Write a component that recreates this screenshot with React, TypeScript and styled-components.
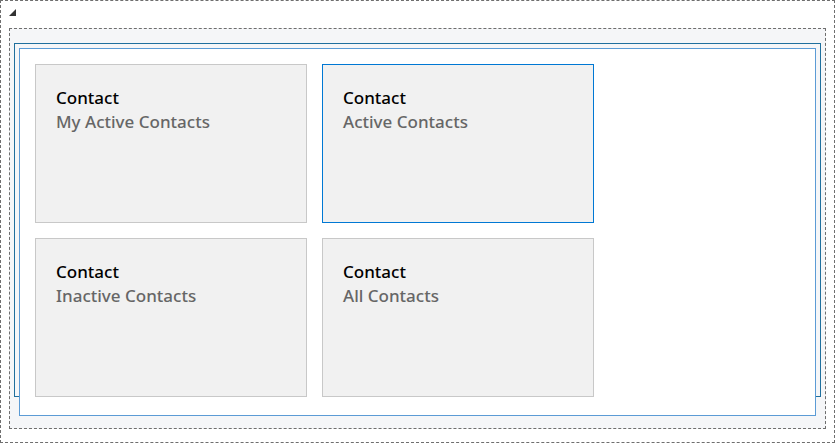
import React from "react";
import styled, { createGlobalStyle } from "styled-components";

const Global = createGlobalStyle`
  html, body { margin: 0; padding: 0; background: #ffffff; }
  body { font-family: "Noto Sans", "Open Sans", sans-serif; }
`;

const Frame = styled.div`
  box-sizing: border-box;
  width: 835px;
  height: 443px;
  border: 1px dashed #6e6e6e;
  padding: 8px 8px 13px 8px;
  display: flex;
  flex-direction: column;
`;

const Corner = styled.div`
  height: 19px;
  display: flex;
  align-items: flex-start;
`;

const Section = styled.div`
  position: relative;
  box-sizing: border-box;
  flex: 1;
  border: 1px dashed #6e6e6e;
  background: #f5f6f8;
  padding: 19px 9px 12px 9px;
  display: flex;
`;

const Selection = styled.div`
  position: absolute;
  left: 4px;
  top: 14px;
  width: 807px;
  height: 354px;
  box-sizing: border-box;
  border: 1px solid #1f6f9d;
  pointer-events: none;
`;

const Container = styled.div`
  position: relative;
  box-sizing: border-box;
  flex: 1;
  border: 1px solid #5b9bd5;
  background: #ffffff;
  padding: 15px 15px 18px 15px;
  display: grid;
  grid-template-columns: repeat(2, 272px);
  grid-template-rows: repeat(2, 159px);
  gap: 15px;
  align-content: start;
`;

const Card = styled.div<{ $selected?: boolean }>`
  box-sizing: border-box;
  background: #f1f1f1;
  border: 1px solid ${(p) => (p.$selected ? "#0078d4" : "#c8c8c8")};
  padding: 21px 20px;
  display: flex;
  flex-direction: column;
`;

const Title = styled.div`
  font-size: 17px;
  font-weight: 500;
  line-height: 24px;
  color: #000000;
`;

const Subtitle = styled.div`
  font-size: 17px;
  font-weight: 500;
  line-height: 24px;
  color: #666666;
`;

const cards = [
  { sub: "My Active Contacts" },
  { sub: "Active Contacts", selected: true },
  { sub: "Inactive Contacts" },
  { sub: "All Contacts" },
];

export default function App() {
  return (
    <>
      <Global />
      <Frame>
        <Corner>
          <svg width="7" height="7" viewBox="0 0 7 7">
            <polygon points="7,0 7,7 0,7" fill="#333333" />
          </svg>
        </Corner>
        <Section>
          <Selection />
          <Container>
            {cards.map((c) => (
              <Card key={c.sub} $selected={c.selected}>
                <Title>Contact</Title>
                <Subtitle>{c.sub}</Subtitle>
              </Card>
            ))}
          </Container>
        </Section>
      </Frame>
    </>
  );
}
